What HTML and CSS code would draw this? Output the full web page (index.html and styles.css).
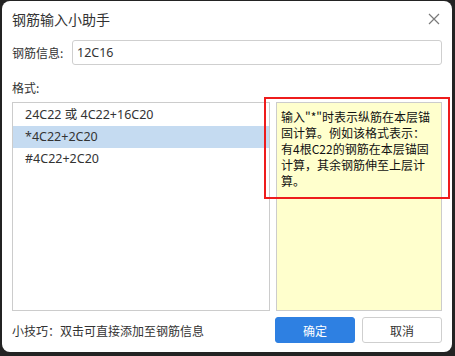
FILE: index.html
```html
<!DOCTYPE html>
<html lang="zh-CN">
<head>
<meta charset="utf-8">
<link rel="stylesheet" href="styles.css">
</head>
<body>
<div class="dialog">
  <div class="header">
    <span class="title">钢筋输入小助手</span>
    <svg class="close" width="12" height="12" viewBox="0 0 12 12"><path d="M1 1 L11 11 M11 1 L1 11" stroke="#7a7a7a" stroke-width="1.2" fill="none"/></svg>
  </div>
  <div class="info-row">
    <label class="info-label">钢筋信息:</label>
    <div class="input">12C16</div>
  </div>
  <div class="section-label">格式:</div>
  <div class="main">
    <div class="list">
      <div class="item">24C22 或 4C22+16C20</div>
      <div class="item selected">*4C22+2C20</div>
      <div class="item">#4C22+2C20</div>
    </div>
    <div class="desc">输入"*"时表示纵筋在本层锚固计算。例如该格式表示：有4根C22的钢筋在本层锚固计算，其余钢筋伸至上层计算。</div>
  </div>
  <div class="footer">
    <span class="tip">小技巧：双击可直接添加至钢筋信息</span>
    <button class="btn primary">确定</button>
    <button class="btn">取消</button>
  </div>
</div>
<div class="annotation"></div>
</body>
</html>
```
FILE: styles.css
```css
html, body {
  margin: 0;
  padding: 0;
}
body {
  width: 455px;
  height: 356px;
  background: #232323;
  font-family: "Noto Sans", "Noto Sans CJK SC", sans-serif;
  font-size: 12px;
  color: #333;
  overflow: hidden;
  position: relative;
}
.dialog {
  margin: 1px 0 0 2px;
  width: 450px;
  height: 351px;
  box-sizing: border-box;
  background: #fff;
  border-radius: 8px;
  padding: 0 10px 9px 10px;
  display: flex;
  flex-direction: column;
}
.header {
  height: 36px;
  display: flex;
  align-items: center;
  justify-content: space-between;
}
.title {
  font-size: 14px;
  color: #333;
  font-family: "Noto Sans CJK SC", sans-serif;
}
.close {
  margin-right: 2px;
}
.info-row {
  margin-top: 3px;
  display: flex;
  align-items: center;
}
.info-label {
  width: 60px;
  font-family: "Noto Sans CJK SC", sans-serif;
}
.input {
  flex: 1;
  height: 25px;
  box-sizing: border-box;
  border: 1px solid #cfcfcf;
  border-radius: 3px;
  padding: 0 4px;
  line-height: 23px;
  font-size: 12.5px;
  color: #333;
}
.section-label {
  margin-top: 15px;
  line-height: 16px;
  height: 16px;
  font-family: "Noto Sans CJK SC", sans-serif;
}
.main {
  margin-top: 6px;
  height: 209px;
  display: flex;
  gap: 6px;
}
.list {
  width: 258px;
  box-sizing: border-box;
  border: 1px solid #cccccc;
  padding-top: 1px;
}
.item {
  height: 22px;
  line-height: 22px;
  padding-left: 12px;
  font-size: 12.5px;
  white-space: nowrap;
}
.item.selected {
  background: #c5dbf1;
}
.desc {
  flex: 1;
  box-sizing: border-box;
  border: 1px solid #cccccc;
  background: #ffffcd;
  padding: 6px 8px 4px 4px;
  line-height: 16px;
  color: #111;
  font-family: "Noto Sans CJK SC", sans-serif;
  word-break: break-all;
}
.footer {
  margin-top: 6px;
  height: 26px;
  display: flex;
  align-items: center;
}
.tip {
  flex: 1;
  font-family: "Noto Sans CJK SC", sans-serif;
}
.btn {
  width: 80px;
  height: 26px;
  box-sizing: border-box;
  border: 1px solid #cfcfcf;
  border-radius: 3px;
  background: #fff;
  color: #333;
  font-family: "Noto Sans CJK SC", sans-serif;
  font-size: 12px;
  padding: 0;
  margin-left: 7px;
}
.btn.primary {
  background: #2e80e2;
  border-color: #2e80e2;
  color: #fff;
  margin-left: 0;
}
.annotation {
  position: absolute;
  left: 264px;
  top: 97px;
  width: 186px;
  height: 102px;
  box-sizing: border-box;
  border: 2px solid #ee1c1c;
}
```
